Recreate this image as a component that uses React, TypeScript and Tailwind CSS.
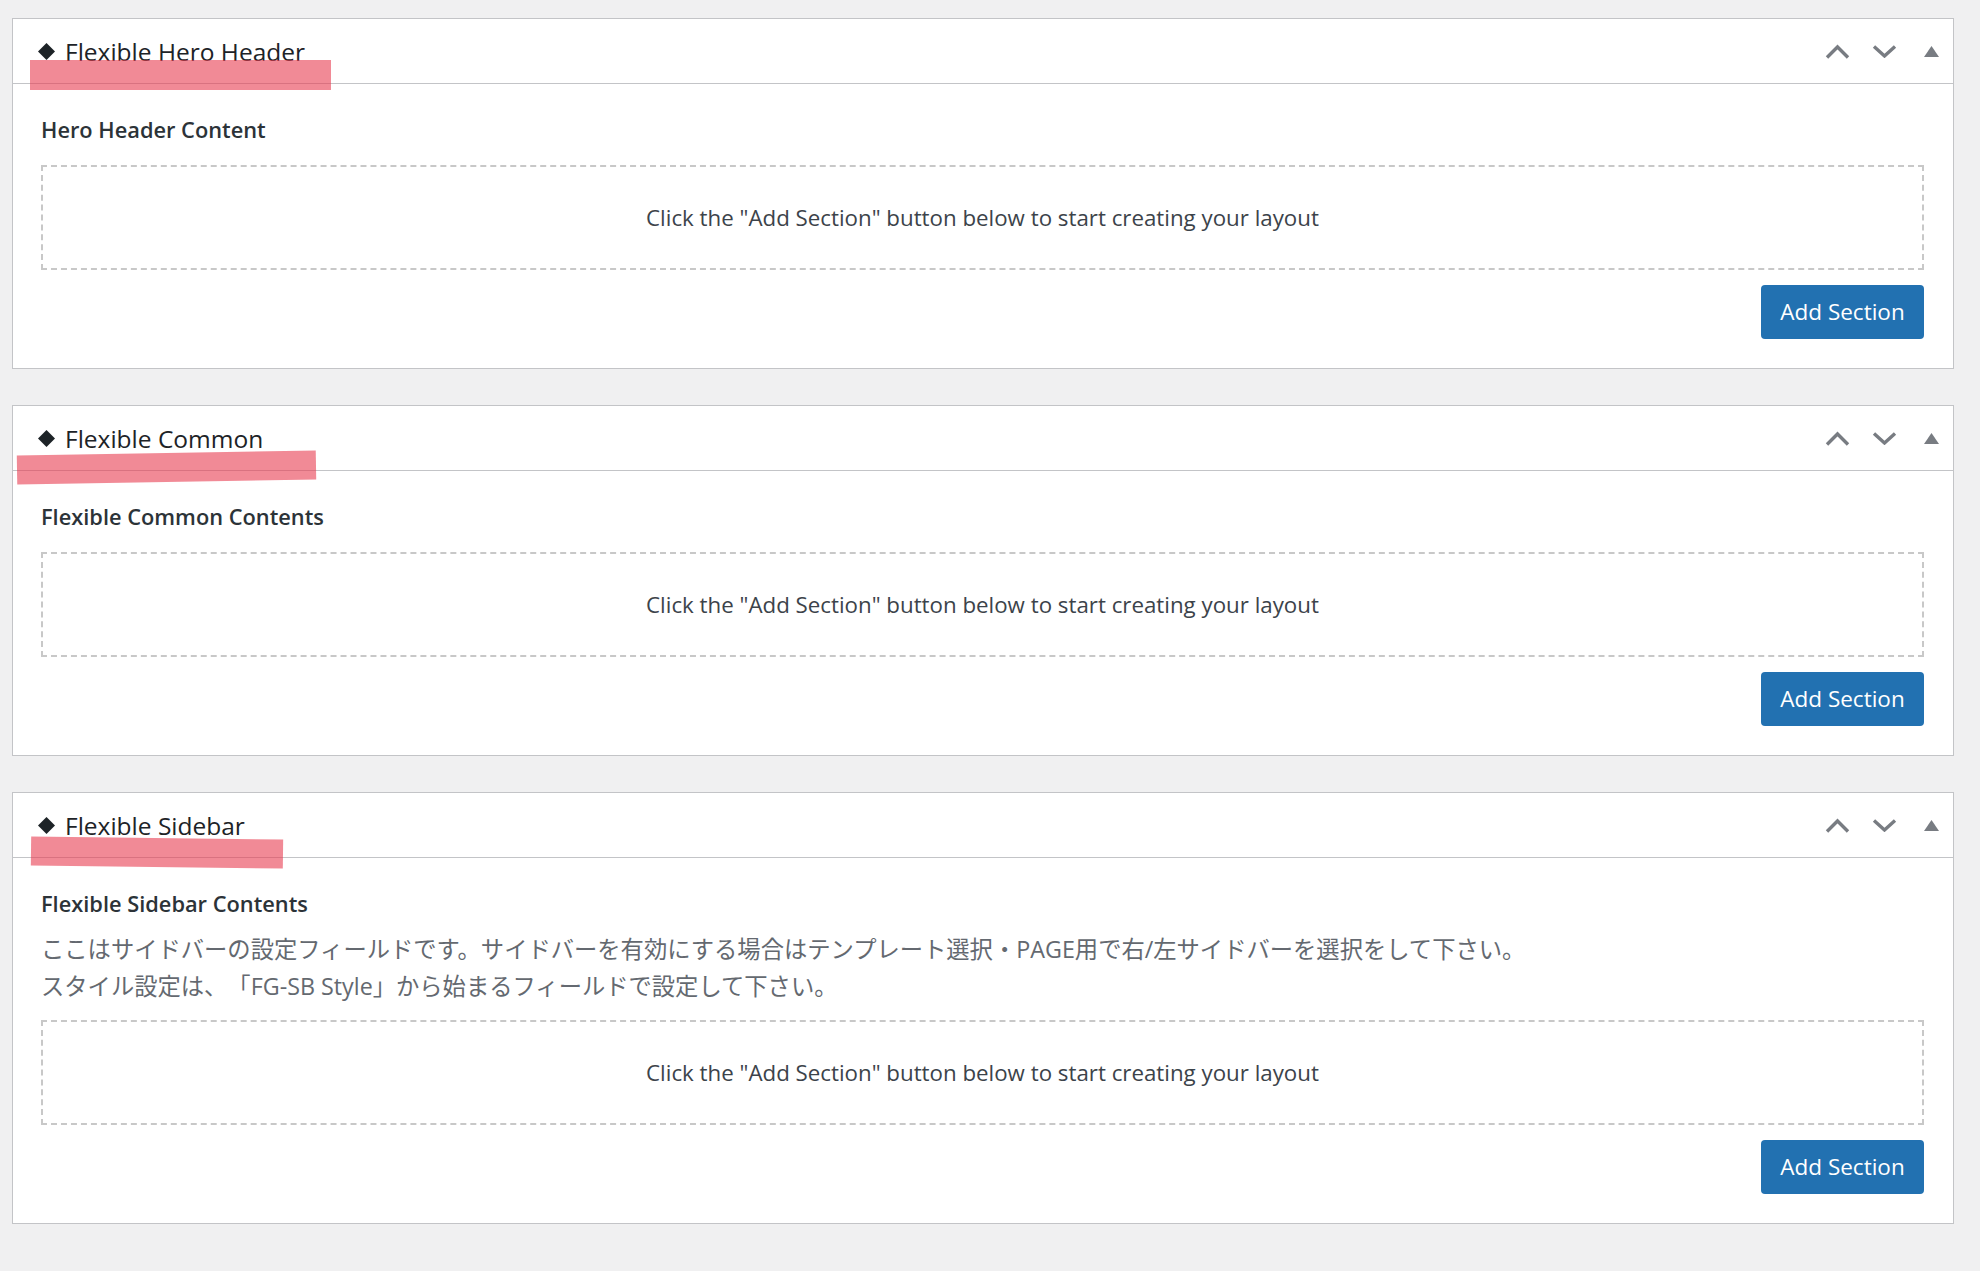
import React from "react";

const sans = "font-['Open_Sans','Noto_Sans_CJK_JP',sans-serif]";

function UpIcon() {
  return (
    <svg width="25" height="15" viewBox="0 0 25 15" fill="none">
      <polyline points="2,13.5 12.5,3 23,13.5" stroke="#787c82" strokeWidth="3.4" />
    </svg>
  );
}

function DownIcon() {
  return (
    <svg width="25" height="13" viewBox="0 0 25 13" fill="none">
      <polyline points="2,1.5 12.5,11 23,1.5" stroke="#787c82" strokeWidth="3.4" />
    </svg>
  );
}

function ToggleIcon() {
  return (
    <svg width="15" height="11" viewBox="0 0 15 11">
      <polygon points="7.5,0 15,11 0,11" fill="#787c82" />
    </svg>
  );
}

function Diamond() {
  return (
    <svg width="17" height="17" viewBox="0 0 17 17">
      <polygon points="8.5,0 17,8.5 8.5,17 0,8.5" fill="#1d2327" />
    </svg>
  );
}

type Card = {
  title: string;
  label: string;
  desc?: string[];
  mark: string;
};

const cards: Card[] = [
  {
    title: "Flexible Hero Header",
    label: "Hero Header Content",
    mark: "left-[17px] top-[41px] w-[301px] h-[30px]",
  },
  {
    title: "Flexible Common",
    label: "Flexible Common Contents",
    mark: "left-[4px] top-[47px] w-[299px] h-[29px] -rotate-[0.95deg]",
  },
  {
    title: "Flexible Sidebar",
    label: "Flexible Sidebar Contents",
    desc: [
      "ここはサイドバーの設定フィールドです。サイドバーを有効にする場合はテンプレート選択・PAGE用で右/左サイドバーを選択をして下さい。",
      "スタイル設定は、「FG-SB Style」から始まるフィールドで設定して下さい。",
    ],
    mark: "left-[18px] top-[45px] w-[252px] h-[29px] rotate-[0.7deg]",
  },
];

function Postbox({ card }: { card: Card }) {
  return (
    <div className="relative border border-[#c3c4c7] bg-white">
      <div className="flex h-[65px] items-center border-b border-[#c3c4c7] pl-[25px] pr-[14px]">
        <Diamond />
        <h2 className="ml-[10px] pt-[2px] text-[24.5px] leading-none text-[#1d2327]">{card.title}</h2>
        <div className="ml-auto flex items-center">
          <UpIcon />
          <span className="ml-[22px]">
            <DownIcon />
          </span>
          <span className="ml-[27px]">
            <ToggleIcon />
          </span>
        </div>
      </div>
      <div className="pl-[28px] pr-[29px] pt-[31px] pb-[29px]">
        <div className="text-[21.8px] leading-[30px] font-semibold text-[#2c3338]">{card.label}</div>
        {card.desc && (
          <div className="mt-[12px] text-[23.3px] leading-[37px] text-[#646970] [text-spacing-trim:space-all]">
            {card.desc.map((line) => (
              <p key={line}>{line}</p>
            ))}
          </div>
        )}
        <div
          className={
            (card.desc ? "mt-[15px] " : "mt-[20px] ") +
            "flex h-[105px] items-center justify-center border-2 border-dashed border-[#c8c8c8] text-[22.3px] text-[#3c434a]"
          }
        >
          Click the "Add Section" button below to start creating your layout
        </div>
        <div className="mt-[15px] flex justify-end">
          <button className="h-[54px] w-[163px] rounded-[4px] bg-[#2271b1] text-[22.5px] text-white">
            Add Section
          </button>
        </div>
      </div>
      <div className={"pointer-events-none absolute bg-[rgba(232,60,80,0.6)] " + card.mark} />
    </div>
  );
}

export default function App() {
  return (
    <div className={"min-h-screen bg-[#f0f0f1] pt-[18px] pl-[12px] pr-[26px] " + sans}>
      <div className="flex flex-col gap-[36px]">
        {cards.map((c) => (
          <Postbox key={c.title} card={c} />
        ))}
      </div>
    </div>
  );
}
